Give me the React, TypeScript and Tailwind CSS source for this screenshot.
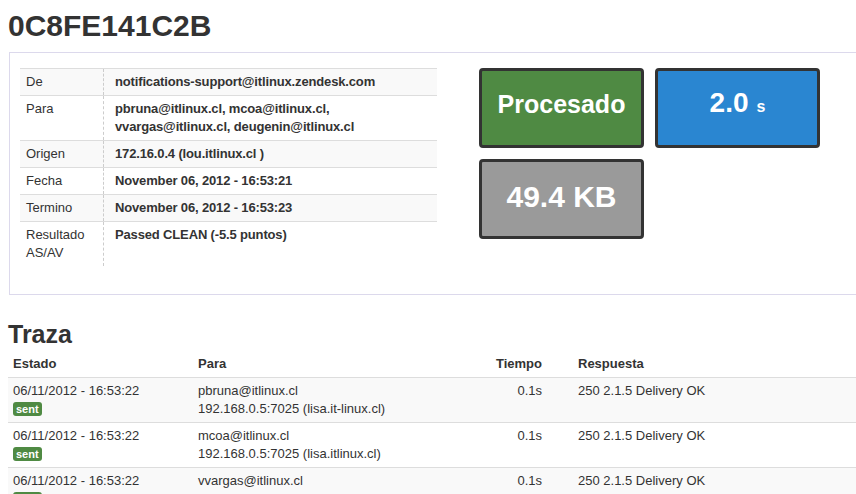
import React from "react";

const info: { label: React.ReactNode; value: React.ReactNode; striped: boolean }[] = [
  { label: "De", value: "notifications-support@itlinux.zendesk.com", striped: true },
  {
    label: "Para",
    value: (
      <>
        pbruna@itlinux.cl, mcoa@itlinux.cl,
        <br />
        vvargas@itlinux.cl, deugenin@itlinux.cl
      </>
    ),
    striped: false,
  },
  { label: "Origen", value: "172.16.0.4 (lou.itlinux.cl )", striped: true },
  { label: "Fecha", value: "November 06, 2012 - 16:53:21", striped: false },
  { label: "Termino", value: "November 06, 2012 - 16:53:23", striped: true },
  {
    label: (
      <>
        Resultado
        <br />
        AS/AV
      </>
    ),
    value: "Passed CLEAN (-5.5 puntos)",
    striped: false,
  },
];

const trace = [
  { to: "pbruna@itlinux.cl", host: "192.168.0.5:7025 (lisa.it-linux.cl)" },
  { to: "mcoa@itlinux.cl", host: "192.168.0.5:7025 (lisa.itlinux.cl)" },
  { to: "vvargas@itlinux.cl", host: "192.168.0.5:7025 (lisa.itlinux.cl)" },
];

export default function App() {
  return (
    <div
      className="w-[856px] h-[494px] overflow-hidden bg-white text-[#333] text-[13px] leading-[18px]"
      style={{ fontFamily: "'Liberation Sans', Arial, Helvetica, sans-serif" }}
    >
      <h1 className="ml-[8px] mt-[8px] text-[30px] leading-[35px] font-bold text-[#333]">0C8FE141C2B</h1>

      <div className="ml-[9px] mt-[9px] w-[870px] h-[243px] border border-[#dcd9ec] pt-[15px] pl-[10px] flex">
        <div className="w-[417px]">
          {info.map((r, i) => (
            <div key={i} className={`flex border-t border-[#dddddd] ${r.striped ? "bg-[#f9f9f9]" : "bg-white"}`}>
              <div className="w-[84px] shrink-0 border-r border-dashed border-[#cccccc] py-[4px] pl-[6px]">{r.label}</div>
              <div className="py-[4px] pl-[11px] font-bold tracking-[-0.15px]">{r.value}</div>
            </div>
          ))}
        </div>
        <div className="ml-[42px] grid grid-cols-[165px_165px] gap-[11px] content-start">
          <div className="h-[80px] rounded-[4px] border-[3px] border-[#333] bg-[#4f8a43] text-white font-bold flex items-center justify-center pb-[8px] text-[25px] leading-[28px]">
            Procesado
          </div>
          <div className="h-[80px] rounded-[4px] border-[3px] border-[#333] bg-[#2a86d1] text-white font-bold flex items-center justify-center pb-[6px] leading-[32px]">
            <span>
              <span className="text-[28px]">2.0</span>
              <span className="text-[16px] ml-[8px]">s</span>
            </span>
          </div>
          <div className="h-[80px] rounded-[4px] border-[3px] border-[#333] bg-[#9a9a9a] text-white font-bold flex items-center justify-center pb-[4px] text-[30px] leading-[32px]">
            49.4 KB
          </div>
        </div>
      </div>

      <h2 className="ml-[8px] mt-[24px] text-[25px] leading-[30px] font-bold text-[#333]">Traza</h2>

      <div className="ml-[8px] mt-[2px]">
        <div className="grid grid-cols-[185px_267px_87px_1fr] font-bold">
          <div className="py-[4px] pl-[5px]">Estado</div>
          <div className="py-[4px] pl-[5px]">Para</div>
          <div className="py-[4px] pr-[5px] text-right">Tiempo</div>
          <div className="py-[4px] pl-[31px]">Respuesta</div>
        </div>
        {trace.map((t, i) => (
          <div
            key={i}
            className={`grid grid-cols-[185px_267px_87px_1fr] border-t border-[#dddddd] ${i % 2 === 0 ? "bg-[#f9f9f9]" : "bg-white"}`}
          >
            <div className="py-[4px] pl-[5px]">
              <div>06/11/2012 - 16:53:22</div>
              <div className="h-[18px] flex items-center">
                <span className="inline-block rounded-[3px] bg-[#4f8a43] text-white font-bold text-[11px] leading-[14px] px-[3px]">
                  sent
                </span>
              </div>
            </div>
            <div className="py-[4px] pl-[5px]">
              <div>{t.to}</div>
              <div>{t.host}</div>
            </div>
            <div className="py-[4px] pr-[5px] text-right">0.1s</div>
            <div className="py-[4px] pl-[31px]">250 2.1.5 Delivery OK</div>
          </div>
        ))}
      </div>
    </div>
  );
}
